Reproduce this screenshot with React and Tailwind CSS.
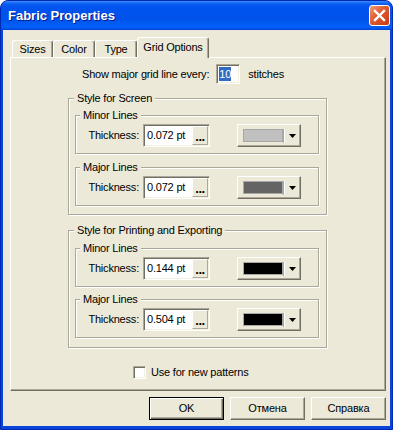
import React from "react";

function Group({ title, legendMl, className, children }) {
  return (
    <div
      className={`flex flex-col border border-[#ACA899] shadow-[1px_1px_0_#ffffff,inset_1px_1px_0_#ffffff] ${className}`}
    >
      <div
        className={`-mt-[7px] h-[13px] self-start bg-[#ECE9D8] px-[3px] leading-[13px] ${legendMl}`}
      >
        {title}
      </div>
      {children}
    </div>
  );
}

function ColorBtn({ swatch }) {
  return (
    <div className="ml-[27px] flex h-[23px] w-[64px] items-center border border-t-white border-l-white border-r-[#716F64] border-b-[#716F64] bg-[#ECE9D8] shadow-[inset_-1px_-1px_0_#ACA899]">
      <div className={`ml-[5px] h-[13px] w-[40px] border border-[#A7A7A7] ${swatch}`} />
      <div className="h-[14px] w-[2px] border-l border-l-[#ACA899] border-r border-r-white" />
      <svg className="ml-[4px]" width="7" height="4" viewBox="0 0 7 4">
        <polygon points="0,0 7,0 3.5,4" fill="#000" />
      </svg>
    </div>
  );
}

function LineBox({ title, value, swatch, className }) {
  return (
    <Group title={title} legendMl="ml-[4px]" className={`ml-[6px] w-[244px] pb-[6px] ${className}`}>
      <div className="mt-[2px] flex items-center">
        <div className="w-[63px] text-right">Thickness:</div>
        <div className="ml-[4px] flex h-[23px] w-[67px] border border-t-[#ACA899] border-l-[#ACA899] border-r-white border-b-white bg-white p-[1px] shadow-[inset_1px_1px_0_#716F64,inset_-1px_-1px_0_#F1EFE2]">
          <div className="flex-1 pl-[2px] leading-[18px]">{value}</div>
          <div className="flex w-[16px] items-end justify-center border border-t-white border-l-white border-r-[#ACA899] border-b-[#ACA899] bg-[#ECE9D8] pb-[3px] text-[13px] font-bold leading-[8px] tracking-[-0.5px]">
            ...
          </div>
        </div>
        <ColorBtn swatch={swatch} />
      </div>
    </Group>
  );
}

function Button({ children, isDefault }) {
  return isDefault ? (
    <div className="flex h-[23px] w-[75px] items-center justify-center border border-black bg-[#ECE9D8] shadow-[inset_1px_1px_0_#ffffff,inset_-1px_-1px_0_#716F64,inset_-2px_-2px_0_#ACA899]">
      {children}
    </div>
  ) : (
    <div className="flex h-[23px] w-[75px] items-center justify-center border border-t-white border-l-white border-r-[#716F64] border-b-[#716F64] bg-[#ECE9D8] shadow-[inset_-1px_-1px_0_#ACA899]">
      {children}
    </div>
  );
}

function Tab({ children, w, selected }) {
  return selected ? (
    <div
      className={`relative z-10 -mb-[1px] flex h-[21px] items-center justify-center rounded-t-[3px] border-l border-t border-r border-l-white border-t-white border-r-[#716F64] bg-[#ECE9D8] pb-[1px] shadow-[inset_-1px_0_0_#ACA899] ${w}`}
    >
      {children}
    </div>
  ) : (
    <div
      className={`flex h-[17px] items-center justify-center rounded-t-[3px] border-l border-t border-r border-l-white border-t-white border-r-[#716F64] bg-[#ECE9D8] shadow-[inset_-1px_0_0_#ACA899] ${w}`}
    >
      {children}
    </div>
  );
}

export default function App() {
  return (
    <div className="h-[430px] w-[393px] bg-white font-['Liberation_Sans',Arial,sans-serif] text-[11px] leading-[13px] tracking-[-0.2px] text-black">
      <div className="flex h-full w-full flex-col overflow-hidden rounded-t-[8px] border border-[#0027B0] bg-[#0845DC]">
        <div className="flex h-[29px] items-center justify-between bg-[linear-gradient(180deg,#3b8cff_0%,#0a5df0_10%,#0053ee_20%,#0052ea_60%,#0060f8_88%,#0058f0_94%,#0040d8_100%)] pl-[7px] pr-[2px]">
          <span className="text-[13px] font-bold tracking-normal text-white [text-shadow:1px_1px_#0a1a8a]">
            Fabric Properties
          </span>
          <div className="flex h-[21px] w-[21px] items-center justify-center rounded-[3px] border border-white bg-[linear-gradient(135deg,#f09a7c_0%,#e0592f_45%,#c83a12_100%)]">
            <svg width="13" height="13" viewBox="0 0 13 13">
              <path d="M2 2 L11 11 M11 2 L2 11" stroke="#fff" strokeWidth="2.4" strokeLinecap="square" />
            </svg>
          </div>
        </div>
        <div className="mx-[2px] mb-[3px] flex flex-1 flex-col bg-[#ECE9D8] pl-[7px] pr-[4px] pt-[7px]">
          <div className="ml-[2px] flex h-[20px] items-end">
            <Tab w="w-[41px]">Sizes</Tab>
            <Tab w="w-[42px]">Color</Tab>
            <Tab w="w-[42px]">Type</Tab>
            <Tab w="w-[72px]" selected>
              Grid Options
            </Tab>
          </div>
          <div className="flex h-[334px] w-[376px] flex-col border border-t-white border-l-white border-r-[#716F64] border-b-[#716F64] shadow-[inset_-1px_-1px_0_#ACA899]">
            <div className="ml-[71px] mt-[6px] flex items-center">
              <span>Show major grid line every:</span>
              <div className="ml-[7px] flex h-[20px] w-[24px] items-center border border-t-[#ACA899] border-l-[#ACA899] border-r-white border-b-white bg-white p-[1px] shadow-[inset_1px_1px_0_#716F64,inset_-1px_-1px_0_#F1EFE2]">
                <span className="ml-[1px] bg-[#316AC5] leading-[14px] text-white">10</span>
              </div>
              <span className="ml-[8px]">stitches</span>
            </div>

            <Group title="Style for Screen" legendMl="ml-[5px]" className="ml-[57px] mt-[14px] w-[259px] pb-[8px]">
              <LineBox title="Minor Lines" value="0.072 pt" swatch="bg-[#C0C0C0]" className="mt-[10px]" />
              <LineBox title="Major Lines" value="0.072 pt" swatch="bg-[#646464]" className="mt-[13px]" />
            </Group>

            <Group
              title="Style for Printing and Exporting"
              legendMl="ml-[5px]"
              className="ml-[57px] mt-[15px] w-[259px] pb-[9px]"
            >
              <LineBox title="Minor Lines" value="0.144 pt" swatch="bg-black" className="mt-[11px]" />
              <LineBox title="Major Lines" value="0.504 pt" swatch="bg-black" className="mt-[12px]" />
            </Group>

            <div className="ml-[122px] mt-[18px] flex items-center">
              <div className="h-[13px] w-[13px] border border-t-[#ACA899] border-l-[#ACA899] border-r-white border-b-white bg-white shadow-[inset_1px_1px_0_#716F64,inset_-1px_-1px_0_#F1EFE2]" />
              <span className="ml-[5px]">Use for new patterns</span>
            </div>
          </div>
          <div className="mt-[6px] flex w-[376px] justify-end gap-[6px]">
            <Button isDefault>OK</Button>
            <Button>Отмена</Button>
            <Button>Справка</Button>
          </div>
        </div>
      </div>
    </div>
  );
}
